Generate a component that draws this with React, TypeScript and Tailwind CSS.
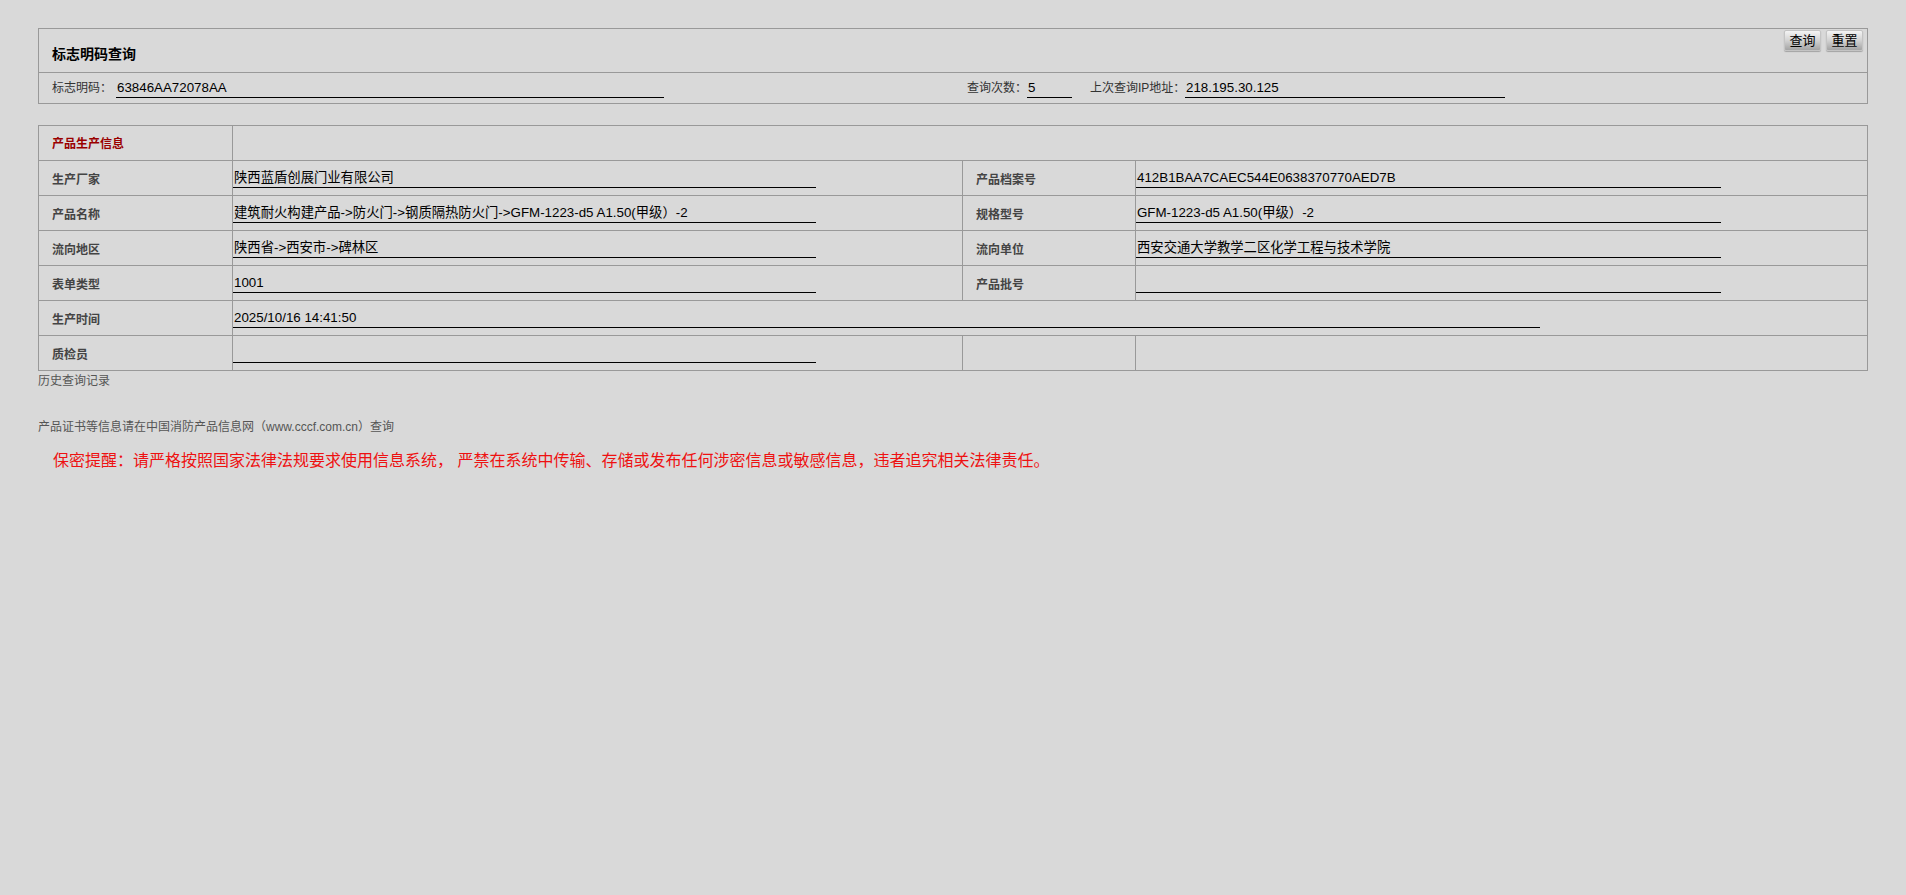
import React from "react";

const FONT = { fontFamily: '"Liberation Sans", Arial, "Noto Sans CJK SC", sans-serif' };

function Line({ w, children }: { w: string; children?: React.ReactNode }) {
  return (
    <div className={`${w} h-[20px] border-b border-black text-[13.33px] leading-[19px] text-black pl-[1px] whitespace-nowrap overflow-hidden`}>
      {children}
    </div>
  );
}

function Label({ children }: { children: React.ReactNode }) {
  return (
    <div className="h-[35px] border-r border-b border-[#999] flex items-center pl-[13px] pt-[3px] text-[12px] font-bold text-[#444]">
      {children}
    </div>
  );
}

function Value({ children, span, w = "w-[80%]" }: { children?: React.ReactNode; span?: boolean; w?: string }) {
  return (
    <div className={`h-[35px] border-r border-b border-[#999] flex items-center ${span ? "col-span-3" : ""}`}>
      <Line w={w}>{children}</Line>
    </div>
  );
}

function Btn({ children }: { children: React.ReactNode }) {
  return (
    <div className="w-[37px] h-[21px] rounded-[2px] bg-gradient-to-b from-[#f4f4f4] via-[#d2d2d2] to-[#a4a4a4] border border-[#c4c4c4] flex items-center justify-center text-[13px] text-black shadow-[0_1px_1px_rgba(0,0,0,0.25)]">
      {children}
    </div>
  );
}

export default function App() {
  return (
    <div className="min-h-[895px] bg-[#d9d9d9] pt-[28px] px-[38px]" style={FONT}>
      {/* Query box */}
      <div className="border border-[#999]">
        <div className="h-[44px] border-b border-[#999] flex justify-between">
          <div className="pl-[13px] pt-[15px] text-[14px] leading-[20px] font-bold text-black">标志明码查询</div>
          <div className="flex gap-[5px] pt-[1px] pr-[4px]">
            <Btn>查询</Btn>
            <Btn>重置</Btn>
          </div>
        </div>
        <div className="h-[30px] grid grid-cols-2">
          <div className="flex items-center pl-[13px]">
            <span className="text-[12px] text-[#333] w-[64px] shrink-0">标志明码：</span>
            <Line w="w-[548px]">63846AA72078AA</Line>
          </div>
          <div className="flex items-center pl-[14px]">
            <span className="text-[12px] text-[#333] w-[60px] shrink-0">查询次数：</span>
            <Line w="w-[45px]">5</Line>
            <span className="text-[12px] text-[#333] ml-[18px] w-[95px] shrink-0 whitespace-nowrap">上次查询IP地址：</span>
            <Line w="w-[320px]">218.195.30.125</Line>
          </div>
        </div>
      </div>

      {/* Production info table */}
      <div className="mt-[21px] border-t border-l border-[#999] grid grid-cols-[194px_730px_173px_1fr]">
        <div className="h-[35px] border-r border-b border-[#999] flex items-center pl-[13px] pt-[1px] text-[12px] font-bold text-[#9a0000]">
          产品生产信息
        </div>
        <div className="h-[35px] border-r border-b border-[#999] col-span-3" />

        <Label>生产厂家</Label>
        <Value>陕西蓝盾创展门业有限公司</Value>
        <Label>产品档案号</Label>
        <Value>412B1BAA7CAEC544E0638370770AED7B</Value>

        <Label>产品名称</Label>
        <Value>建筑耐火构建产品-&gt;防火门-&gt;钢质隔热防火门-&gt;GFM-1223-d5 A1.50(甲级）-2</Value>
        <Label>规格型号</Label>
        <Value>GFM-1223-d5 A1.50(甲级）-2</Value>

        <Label>流向地区</Label>
        <Value>陕西省-&gt;西安市-&gt;碑林区</Value>
        <Label>流向单位</Label>
        <Value>西安交通大学教学二区化学工程与技术学院</Value>

        <Label>表单类型</Label>
        <Value>1001</Value>
        <Label>产品批号</Label>
        <Value />

        <Label>生产时间</Label>
        <Value span>2025/10/16 14:41:50</Value>

        <Label>质检员</Label>
        <Value />
        <div className="h-[35px] border-r border-b border-[#999]" />
        <div className="h-[35px] border-r border-b border-[#999]" />
      </div>

      <div className="text-[12px] leading-[18px] text-[#555] pt-[1px]">历史查询记录</div>
      <div className="text-[12px] leading-[18px] text-[#555] mt-[28px]">
        产品证书等信息请在中国消防产品信息网（www.cccf.com.cn）查询
      </div>
      <div className="text-[16px] leading-[22px] text-[#ee1111] mt-[14px] pl-[15px]">
        保密提醒：请严格按照国家法律法规要求使用信息系统， 严禁在系统中传输、存储或发布任何涉密信息或敏感信息，违者追究相关法律责任。
      </div>
    </div>
  );
}
